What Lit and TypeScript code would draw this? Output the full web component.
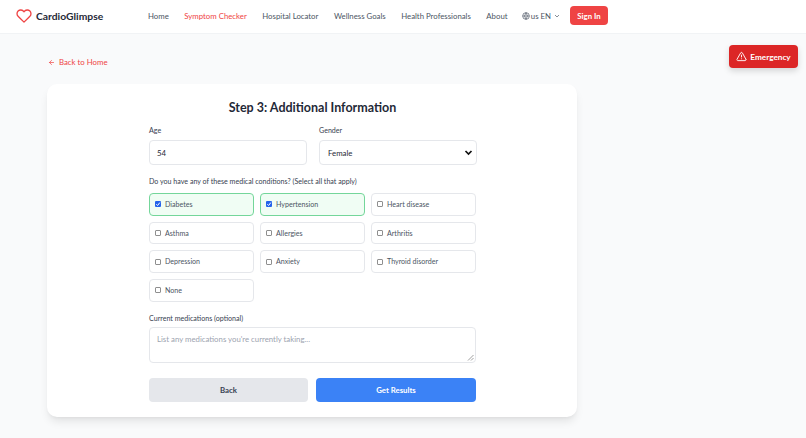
import { LitElement, html, css, svg } from "lit";
import { customElement } from "lit/decorators.js";

const links = ["Home", "Symptom Checker", "Hospital Locator", "Wellness Goals", "Health Professionals", "About"];
const conditions: [string, boolean][] = [
  ["Diabetes", true], ["Hypertension", true], ["Heart disease", false],
  ["Asthma", false], ["Allergies", false], ["Arthritis", false],
  ["Depression", false], ["Anxiety", false], ["Thyroid disorder", false],
  ["None", false],
];

@customElement("app-root")
export class AppRoot extends LitElement {
  static styles = css`
    :host { display: block; height: 438px; overflow: hidden; background: #f9fafb; position: relative;
      font-family: "Lato", "Noto Sans", sans-serif; color: #1f2937; }
    * { box-sizing: border-box; }
    nav { height: 34px; background: #fff; border-bottom: 1px solid #f1f3f5; display: flex; align-items: center; padding: 0 198px 2px 16px; }
    .logo { display: flex; align-items: center; gap: 4px; width: 132px; }
    .logo span { font-size: 10.3px; font-weight: 700; color: #1f2937; }
    .links { display: flex; gap: 15.5px; flex: 1; }
    .links a { font-size: 7.8px; color: #4b5563; white-space: nowrap; }
    .links a.on { color: #ef4444; }
    .lang { display: flex; align-items: center; gap: 1px; font-size: 7.8px; color: #4b5563; margin-right: 9px; white-space: nowrap; }
    .lang .chev { margin-left: 1px; }
    .signin { background: #ef4444; color: #fff; font-size: 7.8px; font-weight: 700; border-radius: 4px; height: 19px; width: 38px; display: flex; align-items: center; justify-content: center; white-space: nowrap; }
    .emergency { position: absolute; left: 729px; top: 45px; width: 69px; height: 23px; background: #dc2626; color: #fff; border-radius: 4px; font-size: 8.2px; font-weight: 700; display: flex; align-items: center; justify-content: center; gap: 3px; box-shadow: 0 3px 6px rgba(0,0,0,.15); }
    main { padding: 22px 0 0 47px; }
    .back-link { display: flex; align-items: center; gap: 4px; color: #ef4444; font-size: 7.8px; height: 12px; margin-left: 1px; }
    .card { margin-top: 16px; width: 530px; height: 333px; background: #fff; border-radius: 10px; box-shadow: 0 6px 10px -2px rgba(0,0,0,.1), 0 2px 4px -2px rgba(0,0,0,.06); padding: 15px 101px 0 102px; }
    h2 { margin: 0; font-size: 12.5px; font-weight: 700; text-align: center; line-height: 17px; color: #1f2937; }
    .two { display: grid; grid-template-columns: 158px 158px; gap: 12px; margin-top: 10px; width: 327px; }
    label.t { display: block; font-size: 7.1px; font-weight: 400; color: #374151; line-height: 10px; }
    .field { height: 25px; margin-top: 4px; border: 1px solid #e5e7eb; border-radius: 4px; background: #fff; font-size: 7.8px; color: #1f2937; padding: 0 7px; display: flex; align-items: center; justify-content: space-between; }
    .select { padding: 0 3px 0 8px; }
    .cond { margin-top: 12px; }
    .grid { display: grid; grid-template-columns: repeat(3, 105px); gap: 6px; margin-top: 6px; grid-auto-rows: 22.7px; }
    .opt { border: 1px solid #e5e7eb; border-radius: 4px; display: flex; align-items: center; gap: 4px; padding: 0 5px; font-size: 7.1px; color: #4b5563; white-space: nowrap; }
    .opt.on { background: #f0fdf4; border-color: #74d69a; }
    .box { width: 6px; height: 6px; border: 1px solid #8f8f8f; border-radius: 1px; background: #fff; flex: none; display: flex; }
    .box.on { background: #2563eb; border: none; }
    .med { margin-top: 12px; }
    .ta { height: 36px; margin-top: 3px; border: 1px solid #e5e7eb; border-radius: 4px; padding: 6px 7px; font-size: 7.8px; color: #9ca3af; position: relative; }
    .grip { position: absolute; right: 1px; bottom: 1px; }
    .btns { display: grid; grid-template-columns: 159px 160px; gap: 8px; margin-top: 15px; width: 327px; }
    .btn { height: 24px; border-radius: 4px; font-size: 7.8px; font-weight: 700; display: flex; align-items: center; justify-content: center; }
    .b1 { background: #e5e7eb; color: #374151; }
    .b2 { background: #3b82f6; color: #fff; }
  `;

  render() {
    const check = svg`<path d="M1.3 3.2 2.6 4.5 4.8 1.6" fill="none" stroke="#fff" stroke-width="1"/>`;
    return html`
      <nav>
        <div class="logo">
          <svg width="16" height="16" viewBox="0 0 24 24" fill="none" stroke="#ef4444" stroke-width="2" stroke-linecap="round" stroke-linejoin="round"><path d="M20.84 4.61a5.5 5.5 0 0 0-7.78 0L12 5.67l-1.06-1.06a5.5 5.5 0 0 0-7.78 7.78l1.06 1.06L12 21.23l7.78-7.78 1.06-1.06a5.5 5.5 0 0 0 0-7.78z"/></svg>
          <span>CardioGlimpse</span>
        </div>
        <div class="links">${links.map((l, i) => html`<a class=${i === 1 ? "on" : ""}>${l}</a>`)}</div>
        <div class="lang">
          <svg width="8" height="8" viewBox="0 0 24 24" fill="none" stroke="#4b5563" stroke-width="2"><circle cx="12" cy="12" r="10"/><path d="M2 12h20M12 2a15 15 0 0 1 0 20M12 2a15 15 0 0 0 0 20"/></svg>
          <span>us EN</span>
          <svg class="chev" width="8" height="8" viewBox="0 0 24 24" fill="none" stroke="#4b5563" stroke-width="2"><path d="m6 9 6 6 6-6"/></svg>
        </div>
        <div class="signin">Sign In</div>
      </nav>
      <div class="emergency">
        <svg width="11" height="11" viewBox="0 0 24 24" fill="none" stroke="#fff" stroke-width="2" stroke-linecap="round" stroke-linejoin="round"><path d="m21.73 18-8-14a2 2 0 0 0-3.48 0l-8 14A2 2 0 0 0 4 21h16a2 2 0 0 0 1.73-3"/><path d="M12 9v4M12 17h.01"/></svg>
        <span>Emergency</span>
      </div>
      <main>
        <div class="back-link">
          <svg width="7" height="7" viewBox="0 0 24 24" fill="none" stroke="#ef4444" stroke-width="2.4" stroke-linecap="round" stroke-linejoin="round"><path d="m12 19-7-7 7-7M19 12H5"/></svg>
          <span>Back to Home</span>
        </div>
        <section class="card">
          <h2>Step 3: Additional Information</h2>
          <div class="two">
            <div><label class="t">Age</label><div class="field">54</div></div>
            <div><label class="t">Gender</label>
              <div class="field select"><span>Female</span>
                <svg width="9" height="9" viewBox="0 0 24 24" fill="none" stroke="#111" stroke-width="4.5"><path d="m4 8 8 8 8-8"/></svg>
              </div>
            </div>
          </div>
          <div class="cond">
            <label class="t">Do you have any of these medical conditions? (Select all that apply)</label>
            <div class="grid">
              ${conditions.map(([n, on]) => html`
                <div class="opt ${on ? "on" : ""}">
                  <span class="box ${on ? "on" : ""}">${on ? html`<svg width="6" height="6" viewBox="0 0 6 6">${check}</svg>` : ""}</span>
                  <span>${n}</span>
                </div>`)}
            </div>
          </div>
          <div class="med">
            <label class="t">Current medications (optional)</label>
            <div class="ta">List any medications you're currently taking...
              <svg class="grip" width="7" height="7" viewBox="0 0 7 7" stroke="#777" stroke-width=".7"><path d="M1 6.5 6.5 1M4 6.5 6.5 4"/></svg>
            </div>
          </div>
          <div class="btns">
            <div class="btn b1">Back</div>
            <div class="btn b2">Get Results</div>
          </div>
        </section>
      </main>
    `;
  }
}
